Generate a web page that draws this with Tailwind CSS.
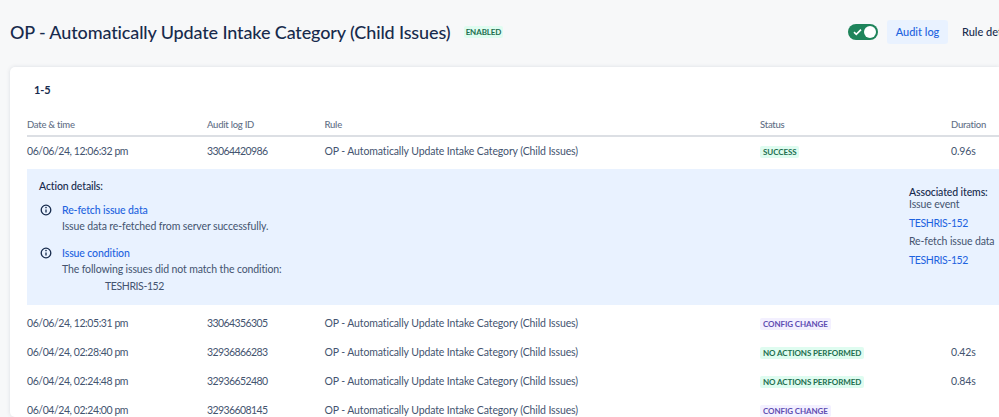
<!DOCTYPE html>
<html lang="en">
<head>
    <meta charset="UTF-8">
    <title>Audit log</title>
    <script src="https://cdn.jsdelivr.net/npm/@tailwindcss/browser@4"></script>
</head>
<body class="bg-[#f7f8f9] text-[#172b4d] font-['Lato',sans-serif] w-[999px] h-[417px] overflow-hidden">
    <!-- header -->
    <div class="h-[67px] flex items-center pl-[10px] pb-[3px] whitespace-nowrap">
        <h1 class="text-[18px] tracking-[-0.13px] font-medium text-[#172b4d] w-[454px] shrink-0">OP - Automatically Update Intake Category (Child Issues)</h1>
        <span class="bg-[#dffcf0] text-[#216e4e] text-[8px] tracking-[-0.1px] font-bold text-center rounded-[2px] leading-[12px] w-[39px] shrink-0">ENABLED</span>
        <div class="ml-[345px] w-[30px] h-[16px] shrink-0 rounded-full bg-[#1f845a] flex items-center justify-between pl-[5px] pr-[2px]">
            <svg width="9" height="8" viewBox="0 0 9 8" fill="none"><path d="M1 4.2 3.3 6.4 8 1.6" stroke="#fff" stroke-width="1.6"/></svg>
            <span class="w-[12px] h-[12px] rounded-full bg-white"></span>
        </div>
        <span class="ml-[9px] h-[24px] w-[61px] shrink-0 justify-center flex items-center rounded-[3px] bg-[#e9f2ff] text-[#1d63e0] text-[11px] font-medium">Audit log</span>
        <span class="ml-[14px] text-[11px] font-medium text-[#172b4d]">Rule details</span>
    </div>

    <!-- card -->
    <div class="ml-[10px] w-[989px] h-[350px] bg-white rounded-l-[5px] shadow-[0_0_4px_rgba(9,30,66,0.12)] pl-[17px] text-[10.5px] tracking-[-0.12px] text-[#44546f] whitespace-nowrap overflow-hidden">
        <div class="h-[46px] pt-[15px] pl-[7px] text-[11px] font-bold text-[#172b4d] leading-[16px]">1-5</div>

        <div class="grid grid-cols-[180px_117.5px_435.5px_191px_1fr] h-[24px] pt-[2px] items-center border-b-2 border-[#dcdfe4] text-[9.5px] tracking-[-0.25px] font-medium text-[#626f86]">
            <span>Date &amp; time</span><span>Audit log ID</span><span>Rule</span><span>Status</span><span>Duration</span>
        </div>

        <div class="grid grid-cols-[180px_117.5px_435.5px_191px_1fr] h-[32px] pb-[2px] items-center">
            <span class="tracking-[-0.43px]">06/06/24, 12:06:32 pm</span><span class="tracking-[-0.6px]">33064420986</span><span>OP - Automatically Update Intake Category (Child Issues)</span>
            <span><span class="bg-[#dffcf0] text-[#216e4e] text-[8px] tracking-[-0.1px] font-bold px-[3px] py-[1px] rounded-[2px]">SUCCESS</span></span>
            <span>0.96s</span>
        </div>

        <!-- expanded row -->
        <div class="h-[136px] bg-[#e9f2ff] flex pl-[12px] pt-[9px]">
            <div class="w-[870px] shrink-0">
                <div class="font-medium text-[#172b4d] leading-[16px] mb-[8px]">Action details:</div>
                <div class="flex mb-[11px]">
                    <svg class="mt-[2px] ml-[1px] mr-[10px]" width="12" height="12" viewBox="0 0 12 12" fill="none"><circle cx="6" cy="6" r="4.8" stroke="#172b4d" stroke-width="1.3"/><path d="M6 5.4v3" stroke="#172b4d" stroke-width="1.3"/><circle cx="6" cy="3.6" r=".8" fill="#172b4d"/></svg>
                    <div class="leading-[16px]">
                        <div class="text-[#1d63e0] font-medium">Re-fetch issue data</div>
                        <div>Issue data re-fetched from server successfully.</div>
                    </div>
                </div>
                <div class="flex">
                    <svg class="mt-[2px] ml-[1px] mr-[10px]" width="12" height="12" viewBox="0 0 12 12" fill="none"><circle cx="6" cy="6" r="4.8" stroke="#172b4d" stroke-width="1.3"/><path d="M6 5.4v3" stroke="#172b4d" stroke-width="1.3"/><circle cx="6" cy="3.6" r=".8" fill="#172b4d"/></svg>
                    <div class="leading-[16px]">
                        <div class="text-[#1d63e0] font-medium">Issue condition</div>
                        <div>The following issues did not match the condition:</div>
                        <div class="mt-[1px] pl-[43px] tracking-[-0.4px]">TESHRIS-152</div>
                    </div>
                </div>
            </div>
            <div class="leading-[12px] pt-[8px]">
                <div class="font-medium text-[#172b4d]">Associated items:</div>
                <div>Issue event</div>
                <div class="mt-[7px] text-[#1d63e0] tracking-[-0.4px]">TESHRIS-152</div>
                <div class="mt-[6px]">Re-fetch issue data</div>
                <div class="mt-[7px] text-[#1d63e0] tracking-[-0.4px]">TESHRIS-152</div>
            </div>
        </div>

        <div class="grid grid-cols-[180px_117.5px_435.5px_191px_1fr] h-[29px] mt-[4px] items-center">
            <span class="tracking-[-0.43px]">06/06/24, 12:05:31 pm</span><span class="tracking-[-0.6px]">33064356305</span><span>OP - Automatically Update Intake Category (Child Issues)</span>
            <span><span class="bg-[#f3f0ff] text-[#5e4db2] text-[8px] tracking-[-0.1px] font-bold px-[3px] py-[1px] rounded-[2px]">CONFIG CHANGE</span></span>
            <span></span>
        </div>
        <div class="grid grid-cols-[180px_117.5px_435.5px_191px_1fr] h-[29px] items-center">
            <span class="tracking-[-0.43px]">06/04/24, 02:28:40 pm</span><span class="tracking-[-0.6px]">32936866283</span><span>OP - Automatically Update Intake Category (Child Issues)</span>
            <span><span class="bg-[#dffcf0] text-[#216e4e] text-[8px] tracking-[-0.1px] font-bold px-[3px] py-[1px] rounded-[2px]">NO ACTIONS PERFORMED</span></span>
            <span>0.42s</span>
        </div>
        <div class="grid grid-cols-[180px_117.5px_435.5px_191px_1fr] h-[29px] items-center">
            <span class="tracking-[-0.43px]">06/04/24, 02:24:48 pm</span><span class="tracking-[-0.6px]">32936652480</span><span>OP - Automatically Update Intake Category (Child Issues)</span>
            <span><span class="bg-[#dffcf0] text-[#216e4e] text-[8px] tracking-[-0.1px] font-bold px-[3px] py-[1px] rounded-[2px]">NO ACTIONS PERFORMED</span></span>
            <span>0.84s</span>
        </div>
        <div class="grid grid-cols-[180px_117.5px_435.5px_191px_1fr] h-[29px] items-center">
            <span class="tracking-[-0.43px]">06/04/24, 02:24:00 pm</span><span class="tracking-[-0.6px]">32936608145</span><span>OP - Automatically Update Intake Category (Child Issues)</span>
            <span><span class="bg-[#f3f0ff] text-[#5e4db2] text-[8px] tracking-[-0.1px] font-bold px-[3px] py-[1px] rounded-[2px]">CONFIG CHANGE</span></span>
            <span></span>
        </div>
    </div>
</body>
</html>
